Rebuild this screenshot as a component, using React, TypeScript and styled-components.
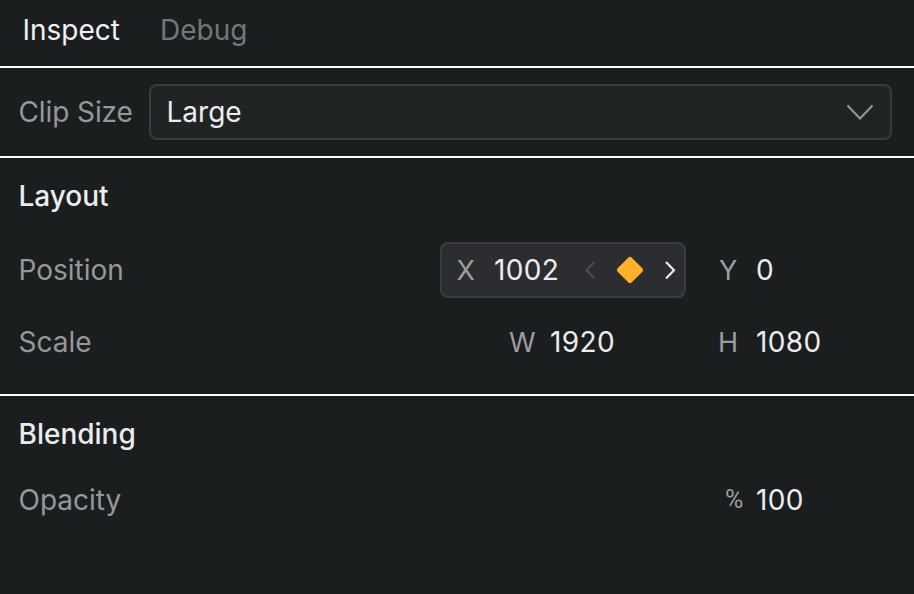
import React from "react";
import styled, { createGlobalStyle } from "styled-components";

const GlobalStyle = createGlobalStyle`
  * { box-sizing: border-box; }
  body { margin: 0; background: #1b1e1f; }
`;

const Panel = styled.main`
  width: 914px;
  height: 594px;
  overflow: hidden;
  background: #1b1e1f;
  color: #ececec;
  font: 400 28px/36px Inter, sans-serif;
  white-space: nowrap;
`;

const Tabs = styled.nav`
  display: flex;
  gap: 40px;
  height: 68px;
  padding: 12px 20px 0 22.5px;
  border-bottom: 2px solid #fff;
`;

const Tab = styled.button<{ $active?: boolean }>`
  height: 36px;
  padding: 0;
  border: 0;
  background: none;
  color: ${(p) => (p.$active ? "#f1f1f1" : "#747778")};
  font: inherit;
`;

const ClipBar = styled.section`
  display: flex;
  align-items: center;
  height: 90px;
  padding: 0 22px 0 18.5px;
  border-bottom: 2px solid #fff;
`;

const Label = styled.span`
  flex: none;
  color: #959899;
`;

const ClipLabel = styled(Label)`
  width: 130.5px;
  letter-spacing: -0.1px;
`;

const Select = styled.div`
  display: flex;
  flex: 1;
  align-items: center;
  justify-content: space-between;
  height: 56px;
  padding: 0 16px 0 15.5px;
  border: 2px solid #393c3e;
  border-radius: 8px;
  background: #212424;
`;

const Section = styled.section<{ $height: number; $divided?: boolean }>`
  height: ${(p) => p.$height}px;
  padding: 20px 20px 0 18.5px;
  border-bottom: ${(p) => (p.$divided ? "2px solid #fff" : "0")};
`;

const Heading = styled.h2<{ $gap: number }>`
  margin: 0 0 ${(p) => p.$gap}px;
  font: inherit;
  font-weight: 500;
`;

const Row = styled.div<{ $height: number }>`
  display: grid;
  grid-template-columns: 421.5px 246px 1fr;
  align-items: center;
  height: ${(p) => p.$height}px;
`;

const Field = styled.div<{ $axis: number; $offset?: number }>`
  display: grid;
  grid-template-columns: ${(p) => p.$axis}px auto;
  align-items: center;
  justify-content: start;
  padding-left: ${(p) => p.$offset ?? 0}px;
`;

const KeyedField = styled.div`
  display: flex;
  align-items: center;
  height: 56px;
  padding-left: 14.5px;
  border: 2px solid #373c3f;
  border-radius: 8px;
  background: #2c2d30;
`;

const Axis = styled.span`
  padding-top: 2px;
  color: #9b9d9e;
  font-size: 27px;
`;

const PercentSign = styled(Axis)`
  padding-top: 0;
  font-family: Roboto, sans-serif;
  font-size: 25px;
`;

const KeyedAxis = styled(Axis)`
  width: 37.5px;
`;

const Value = styled.span`
  letter-spacing: 0.35px;
`;

const KeyedValue = styled(Value)`
  width: 90px;
`;

const Empty = styled.span``;

const Icon = styled.svg`
  display: block;
  flex: none;
  overflow: visible;
`;

const KeyControls = () => (
  <Icon width="92" height="28" viewBox="0 0 92 28" fill="none">
    <path d="m10.5 6-8 8.2 8 8.2" stroke="#505053" strokeWidth="1.8" />
    <rect x="36" y="4" width="20" height="20" rx="2.5" transform="rotate(45 46 14)" fill="#ffb128" />
    <path d="m82 6 8 8.2-8 8.2" stroke="#f0f0f0" strokeWidth="2.1" />
  </Icon>
);

export default function App() {
  return (
    <>
      <GlobalStyle />
      <Panel>
        <Tabs>
          <Tab $active>Inspect</Tab>
          <Tab>Debug</Tab>
        </Tabs>
        <ClipBar>
          <ClipLabel>Clip Size</ClipLabel>
          <Select>
            Large
            <Icon width="28" height="16" viewBox="0 0 28 16" fill="none">
              <path d="m1.5 1.5 12.5 13 12.5-13" stroke="#969899" strokeWidth="2" />
            </Icon>
          </Select>
        </ClipBar>
        <Section $height={238} $divided>
          <Heading $gap={28}>Layout</Heading>
          <Row $height={56}>
            <Label>Position</Label>
            <KeyedField>
              <KeyedAxis>X</KeyedAxis>
              <KeyedValue>1002</KeyedValue>
              <KeyControls />
            </KeyedField>
            <Field $axis={37} $offset={33}>
              <Axis>Y</Axis>
              <Value>0</Value>
            </Field>
          </Row>
          <Row $height={88}>
            <Label>Scale</Label>
            <Field $axis={41} $offset={69}>
              <Axis>W</Axis>
              <Value>1920</Value>
            </Field>
            <Field $axis={38} $offset={32}>
              <Axis>H</Axis>
              <Value>1080</Value>
            </Field>
          </Row>
        </Section>
        <Section $height={198}>
          <Heading $gap={20}>Blending</Heading>
          <Row $height={56}>
            <Label>Opacity</Label>
            <Empty />
            <Field $axis={31} $offset={39}>
              <PercentSign>%</PercentSign>
              <Value>100</Value>
            </Field>
          </Row>
        </Section>
      </Panel>
    </>
  );
}
